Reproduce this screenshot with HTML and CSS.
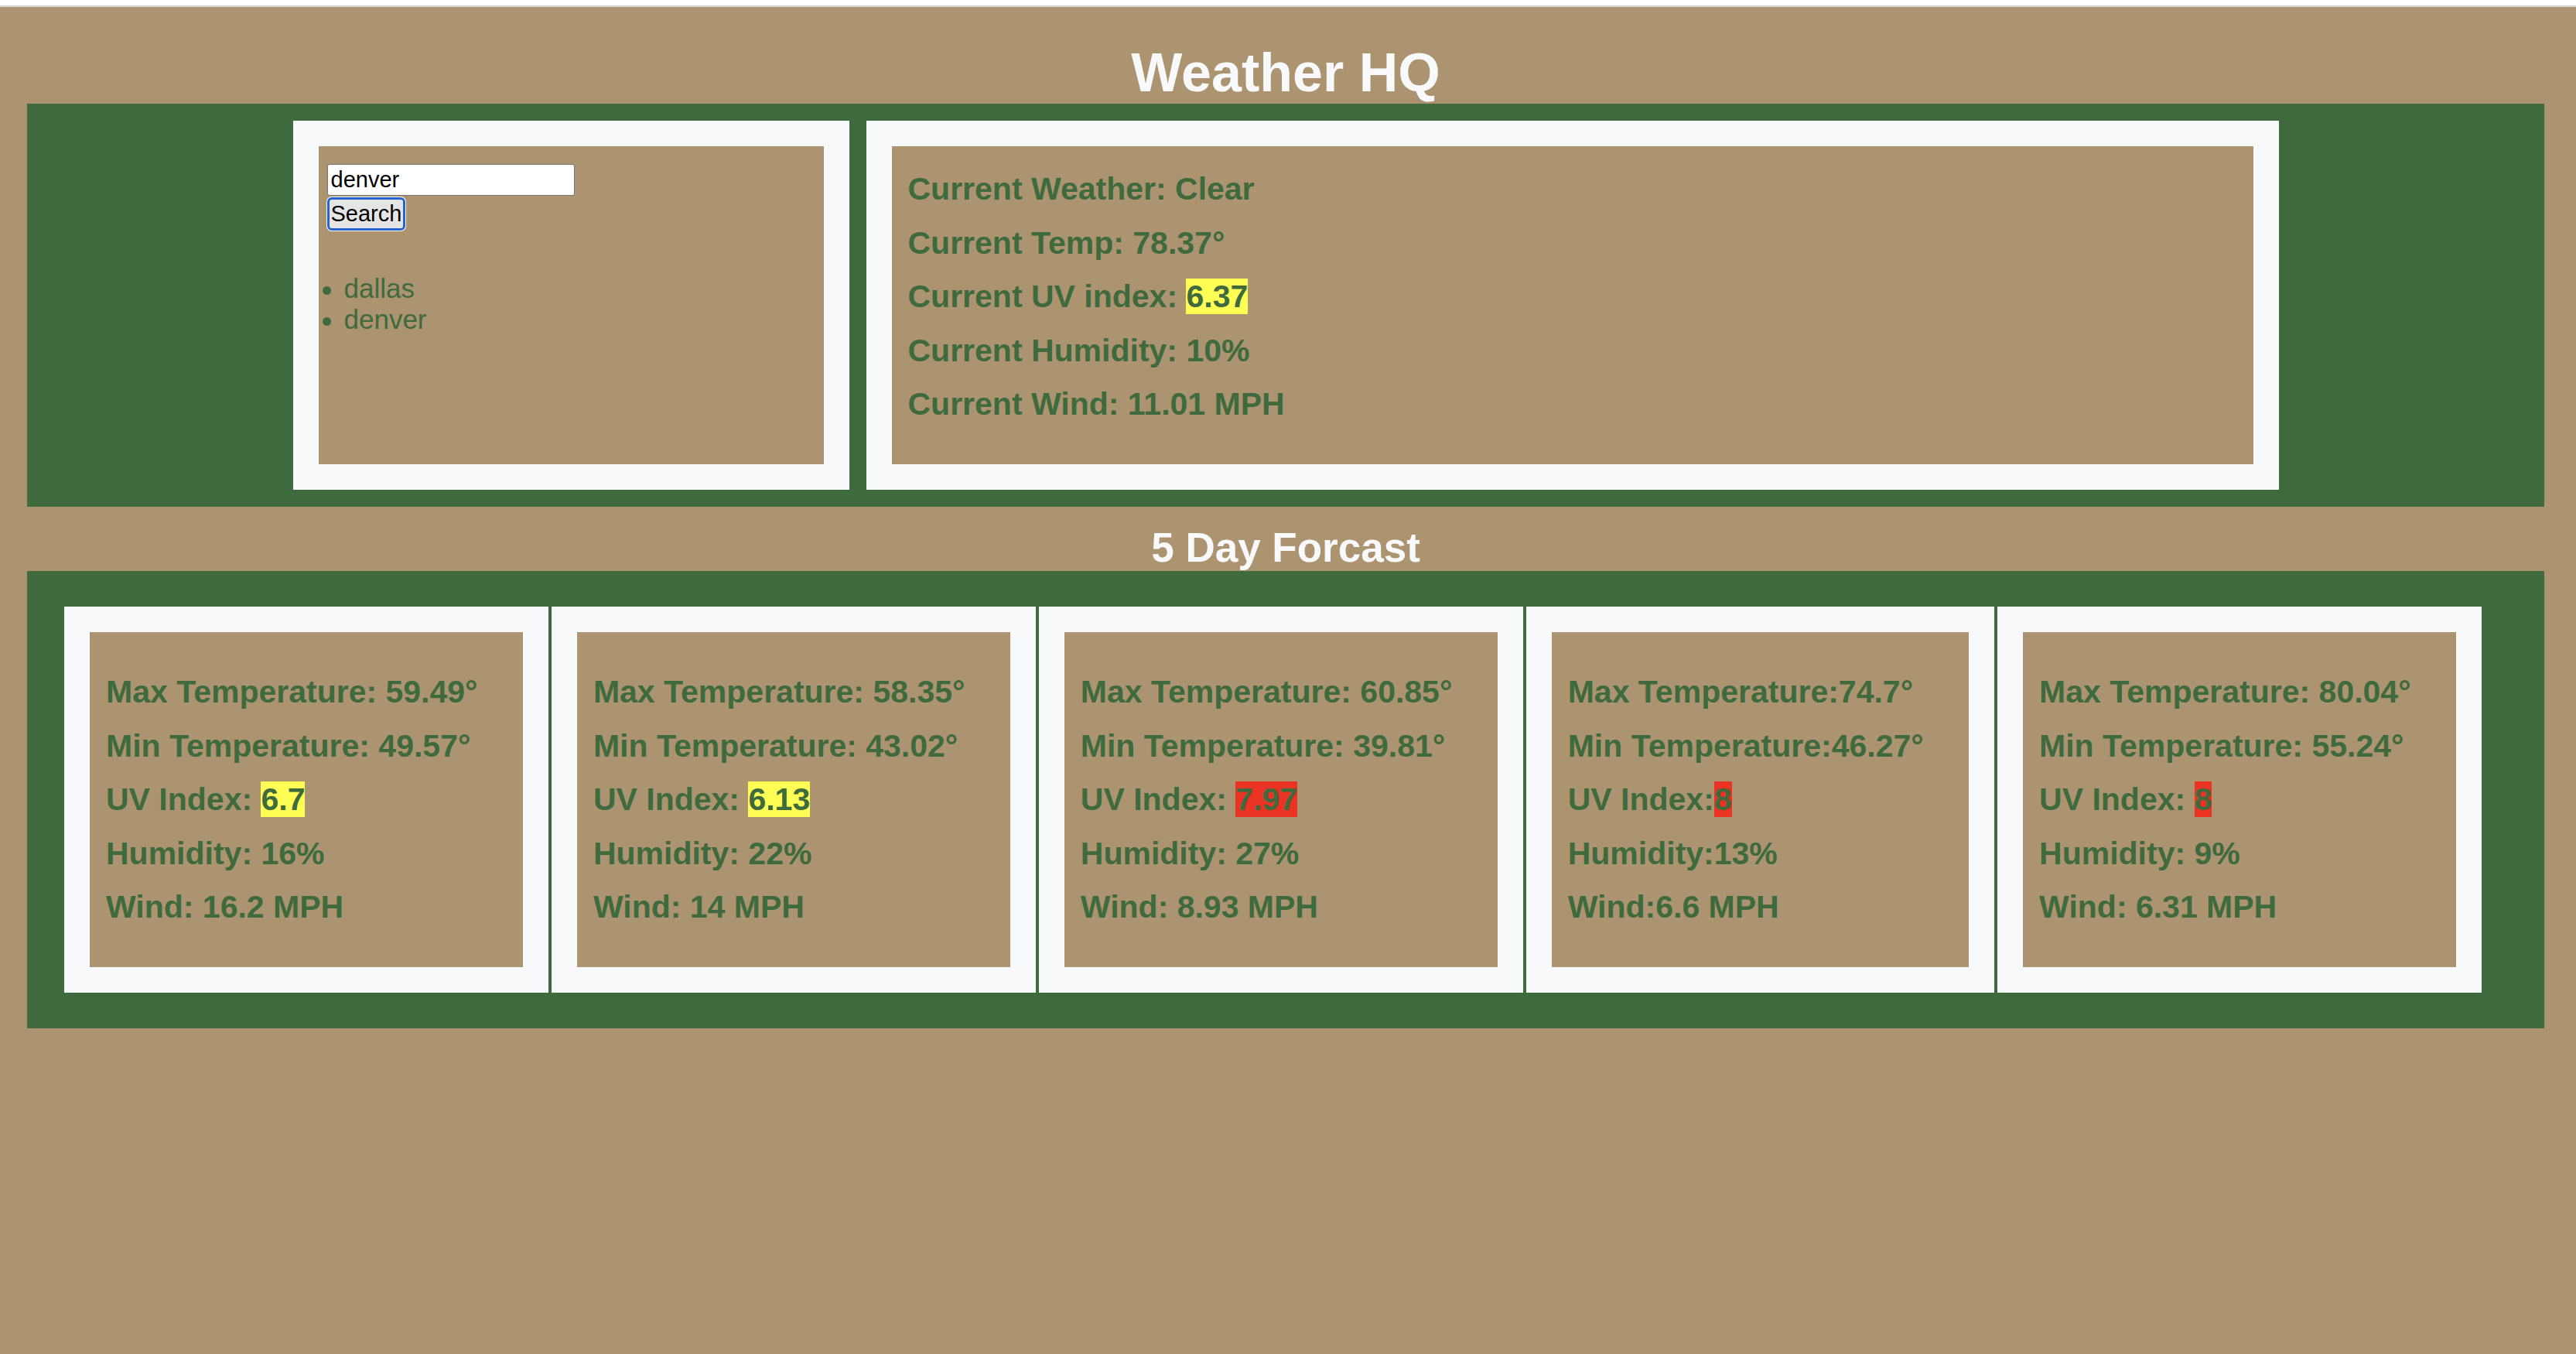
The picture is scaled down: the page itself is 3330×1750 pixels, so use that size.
FILE: index.html
```html
<!DOCTYPE html>
<html lang="en">
<head>
<meta charset="utf-8">
<title>Weather HQ</title>
<link rel="stylesheet" href="styles.css">
</head>
<body>
<div class="topbar"></div>
<main class="page">
  <h1 class="title">Weather HQ</h1>
  <section class="panel panel-current">
    <div class="card search-card">
      <input class="search-input" type="text" value="denver">
      <button class="search-btn" type="button">Search</button>
      <ul class="history">
        <li>dallas</li>
        <li>denver</li>
      </ul>
    </div>
    <div class="card current-card">
      <p class="stat">Current Weather: Clear</p>
      <p class="stat">Current Temp: 78.37°</p>
      <p class="stat">Current UV index: <span class="uv-moderate">6.37</span></p>
      <p class="stat">Current Humidity: 10%</p>
      <p class="stat">Current Wind: 11.01 MPH</p>
    </div>
  </section>
  <h2 class="subtitle">5 Day Forcast</h2>
  <section class="panel panel-forecast">
    <div class="card fcard">
      <p class="stat">Max Temperature: 59.49°</p>
      <p class="stat">Min Temperature: 49.57°</p>
      <p class="stat">UV Index: <span class="uv-moderate">6.7</span></p>
      <p class="stat">Humidity: 16%</p>
      <p class="stat">Wind: 16.2 MPH</p>
    </div>
    <div class="card fcard">
      <p class="stat">Max Temperature: 58.35°</p>
      <p class="stat">Min Temperature: 43.02°</p>
      <p class="stat">UV Index: <span class="uv-moderate">6.13</span></p>
      <p class="stat">Humidity: 22%</p>
      <p class="stat">Wind: 14 MPH</p>
    </div>
    <div class="card fcard">
      <p class="stat">Max Temperature: 60.85°</p>
      <p class="stat">Min Temperature: 39.81°</p>
      <p class="stat">UV Index: <span class="uv-high">7.97</span></p>
      <p class="stat">Humidity: 27%</p>
      <p class="stat">Wind: 8.93 MPH</p>
    </div>
    <div class="card fcard">
      <p class="stat">Max Temperature:74.7°</p>
      <p class="stat">Min Temperature:46.27°</p>
      <p class="stat">UV Index:<span class="uv-high">8</span></p>
      <p class="stat">Humidity:13%</p>
      <p class="stat">Wind:6.6 MPH</p>
    </div>
    <div class="card fcard">
      <p class="stat">Max Temperature: 80.04°</p>
      <p class="stat">Min Temperature: 55.24°</p>
      <p class="stat">UV Index: <span class="uv-high">8</span></p>
      <p class="stat">Humidity: 9%</p>
      <p class="stat">Wind: 6.31 MPH</p>
    </div>
  </section>
</main>
</body>
</html>
```
FILE: styles.css
```css
html {
  background: #ad9470;
}

body {
  margin: 0;
  font-family: "Liberation Sans", Arial, sans-serif;
  color: #000;
}

.topbar {
  height: 7px;
  background: #ffffff;
  border-bottom: 2px solid #d5d5d5;
}

.page {
  margin: 0 41px 0 35px;
}

.title {
  margin: 45px 0 0;
  font-size: 70px;
  line-height: 80px;
  font-weight: bold;
  text-align: center;
  color: #f8f9fa;
}

.subtitle {
  margin: 23px 0 0;
  font-size: 53px;
  line-height: 60px;
  font-weight: bold;
  text-align: center;
  color: #f8f9fa;
}

.panel {
  display: flex;
  background: #3e6a3d;
}

.panel-current {
  padding: 22px 0;
  justify-content: center;
  gap: 22px;
}

.panel-forecast {
  padding: 46px 81px 46px 48px;
  gap: 4px;
}

.card {
  box-sizing: border-box;
  background: #ad9470;
  border: 33px solid #f8f9fa;
}

.search-card {
  width: 719px;
  padding: 23px 11px;
}

.current-card {
  width: 1826px;
  padding: 32px 21px 55px;
  display: flex;
  flex-direction: column;
  gap: 23.5px;
}

.fcard {
  flex: 1 1 auto;
  padding: 54px 21px 55px;
  display: flex;
  flex-direction: column;
  gap: 23.5px;
}

.stat {
  margin: 0;
  font-size: 41px;
  line-height: 46px;
  font-weight: bold;
  color: #3e6a3d;
  white-space: nowrap;
}

.uv-moderate {
  background: #fffe54;
}

.uv-high {
  background: #ea3323;
}

.search-input {
  display: block;
  box-sizing: border-box;
  width: 320px;
  height: 41px;
  margin: 0;
  padding: 0 4px;
  border: 1px solid #767676;
  border-radius: 3px;
  background: #ffffff;
  font-family: "Liberation Sans", Arial, sans-serif;
  font-size: 29px;
  color: #000;
}

.search-btn {
  display: block;
  margin: 2px 0 0;
  padding: 0 2px;
  border: 3px solid #2763d0;
  border-radius: 6px;
  background: #e5e5e5;
  box-shadow: 0 0 0 1px #ffffff;
  font-family: "Liberation Sans", Arial, sans-serif;
  font-size: 29px;
  line-height: 37px;
  color: #000;
}

.history {
  margin: 55px 0 0 -6px;
  padding: 0;
  list-style: none;
}

.history li {
  font-size: 35px;
  line-height: 40px;
  color: #3e6a3d;
}

.history li::before {
  content: "";
  display: inline-block;
  width: 11px;
  height: 11px;
  margin: 0 17px 0 0;
  border-radius: 50%;
  background: #3e6a3d;
  vertical-align: middle;
}
```
